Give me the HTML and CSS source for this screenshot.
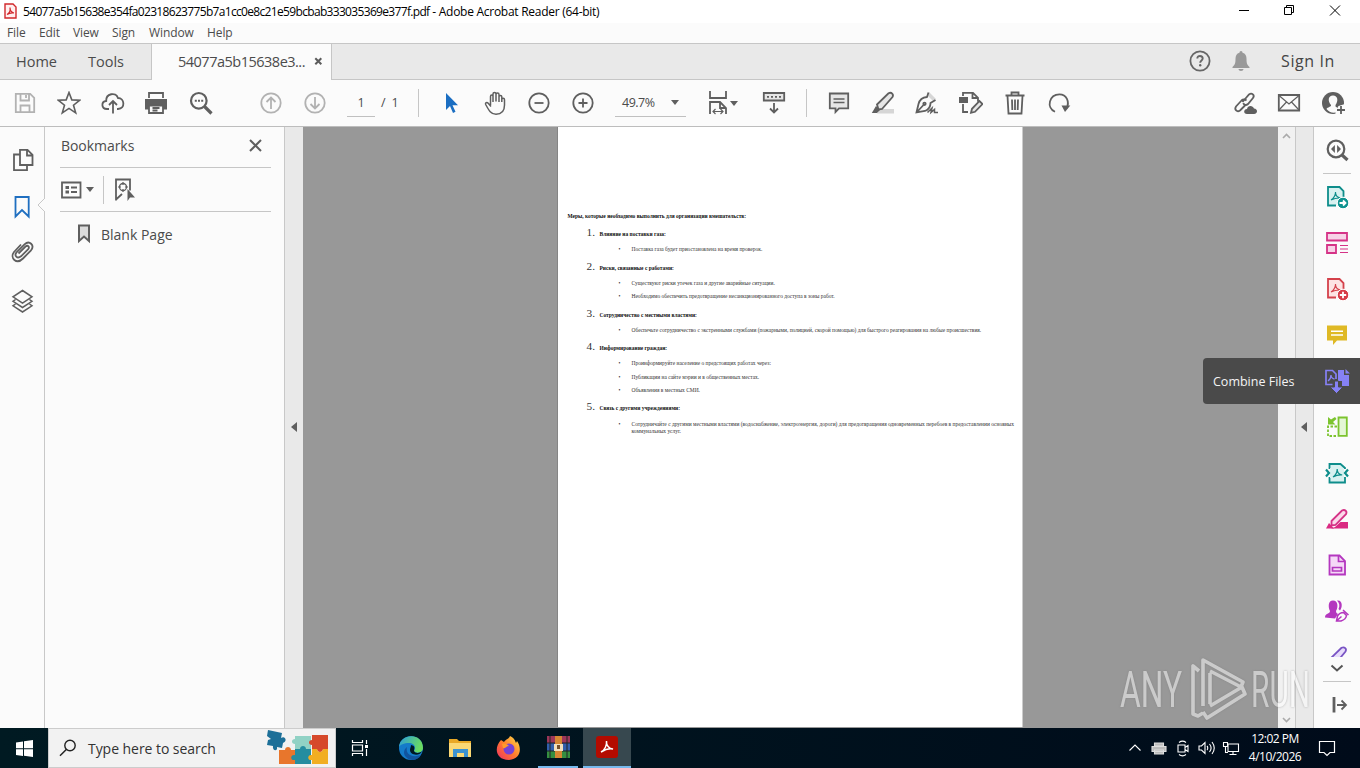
FILE: index.html
```html
<!DOCTYPE html>
<html lang="en">
<head>
    <meta charset="UTF-8">
    <title>Adobe Acrobat Reader (64-bit)</title>
    <link rel="stylesheet" href="styles.css">
</head>
<body>
    <header class="titlebar">
        <svg class="app-icon" width="13" height="16" viewBox="0 0 13 16"><path d="M1 1h8l3 3v11H1z" fill="#fff0f0" stroke="#d1282c" stroke-width="1.4"/><path d="M3 11.5c2-1 3.500-4 3-7 0 3 1.500 5 4 5.500-3-.5-5 .2-7 1.500z" fill="none" stroke="#d1282c" stroke-width="1.200"/></svg>
        <span class="title"><span class="hash">54077a5b15638e354fa02318623775b7a1cc0e8c21e59bcbab333035369e377f.pdf</span> - Adobe Acrobat Reader (64-bit)</span>
        <div class="window-buttons">
            <svg width="45" height="23" viewBox="0 0 45 23"><path d="M17 10.500h10"/></svg>
            <svg width="45" height="23" viewBox="0 0 45 23"><path d="M17.500 7.500h7v7h-7zM19.500 7V5.500h7v7h-2"/></svg>
            <svg width="46" height="23" viewBox="0 0 46 23"><path d="M18 5.500l10 10M28 5.500l-10 10"/></svg>
        </div>
    </header>

    <nav class="menubar">
        <span class="m-file">File</span><span class="m-edit">Edit</span><span class="m-view">View</span><span class="m-sign">Sign</span><span class="m-window">Window</span><span>Help</span>
    </nav>

    <div class="tabs">
        <span class="tab home">Home</span>
        <span class="tab tools">Tools</span>
        <div class="tab-active"><span class="tab-name">54077a5b15638e3...</span>
            <svg width="9" height="9" viewBox="0 0 9 9"><path d="M1.300 1.300l6 6M7.300 1.300l-6 6" stroke="#5c5c5c" stroke-width="2"/></svg>
        </div>
        <div class="account">
            <svg width="24" height="24" viewBox="0 0 24 24"><circle cx="12" cy="12" r="9.600" fill="none" stroke="#666" stroke-width="1.800"/><path d="M9.300 9.500c0-3.400 5.400-3.300 5.400 0 0 2-2.500 2-2.500 4.300" fill="none" stroke="#666" stroke-width="1.900"/><circle cx="12.200" cy="16.300" r="1.200" fill="#666"/></svg>
            <svg class="bell" width="20" height="22" viewBox="0 0 20 22"><path d="M10 1c1 0 1.500.8 1.500 1.700 3 .8 4 3 4 6 0 5 .8 6.300 3 8.300v1H1.500v-1c2.200-2 3-3.300 3-8.300 0-3 1-5.200 4-6C8.500 1.800 9 1 10 1zM7.500 19h5c0 2.500-5 2.500-5 0z" fill="#999"/></svg>
            <span class="sign-in">Sign In</span>
        </div>
    </div>

    <div class="toolbar">
        <div class="btn"><svg class="ic light" viewBox="0 0 24 24"><path d="M2.800 2.800h14.400l4 4v14.400H2.800zM7.500 3v6.500h8.500V3M13 4v3M7.500 21v-6.500h9V21"/></svg></div>
        <div class="btn"><svg class="ic" viewBox="0 0 24 24"><path d="M12 1.500l2.800 7.400 8 .3-6.300 5 2.200 7.600L12 17.400l-6.700 4.400 2.200-7.600-6.300-5 8-.3z" stroke-width="1.600"/></svg></div>
        <div class="btn"><svg class="ic" viewBox="0 0 24 24"><path d="M8 18H6c-6-.2-6-7.500-.8-8C4.800 2.500 14.800.5 17 7c6.500 0 7.800 10.500 0 11h-1M12 22.500v-12M8 14l4-4 4 4"/></svg></div>
        <div class="btn print"><svg class="ic" viewBox="0 0 24 24"><path d="M1 8h22v10.500h-4v-4H5v4H1z" fill="#5f5f5f" stroke="none"/><path d="M5 7V2h14v5M5 14.500h14V22H5zM8.500 17h7M8.500 19.500h5"/></svg></div>
        <div class="btn"><svg class="ic" viewBox="0 0 24 24"><circle cx="9.800" cy="9.800" r="7.800" stroke-width="2.200"/><path d="M15.500 15.500l7 7" stroke-width="3.200"/><path d="M5.800 9.800h2M9 9.800h2M12.200 9.800h2" stroke-width="2"/></svg></div>
        <div class="btn gap-pages"><svg class="ic light" viewBox="0 0 24 24"><circle cx="12" cy="12" r="9.700"/><path d="M12 18V7M7.500 11L12 6.500l4.500 4.500"/></svg></div>
        <div class="btn"><svg class="ic light" viewBox="0 0 24 24"><circle cx="12" cy="12" r="9.700"/><path d="M12 6v11M7.500 13l4.500 4.500 4.500-4.500"/></svg></div>
        <span class="page-input">1</span>
        <span class="page-total">/&nbsp;&nbsp;1</span>
        <i class="sep"></i>
        <div class="btn gap-tools"><svg class="ic" viewBox="0 0 24 24"><path d="M7 2v17l4-4 3 7 2.500-1.200-3-6.500H19z" fill="#1b6ec2" stroke="none"/></svg></div>
        <div class="btn"><svg class="ic hand" viewBox="0 0 24 24"><path d="M6.500 14V5.500c0-2 2.500-2 2.500 0V11M9 10V3c0-2 3-2 3 0v7.500M12 10V3.500c0-2 3-2 3 0v7.500M15 10.500V5.800c0-1.800 2.800-1.800 2.800 0V11M17.800 11V8.500c0-1.600 2.700-1.500 2.700.2V14c0 5-2.500 9.200-8.500 9.200-5 0-7-3.500-10.300-9.700-.8-1.600 1.200-2.600 2.500-1.200L7 15.500" stroke-width="1.500"/></svg></div>
        <div class="btn"><svg class="ic" viewBox="0 0 24 24"><circle cx="12" cy="12" r="9.700"/><path d="M7.500 12h9"/></svg></div>
        <div class="btn"><svg class="ic" viewBox="0 0 24 24"><circle cx="12" cy="12" r="9.700"/><path d="M7.500 12h9M12 7.500v9"/></svg></div>
        <div class="zoom-box"><span>49.7%</span><i class="caret"></i></div>
        <div class="btn fit"><svg class="ic" viewBox="0 0 24 24"><path d="M4 0v7h16V0M4 23V11h10l6 6v6M14 11v6h6"/><path d="M7.500 20.500h9M9.500 18l-2.500 2.500L9.500 23M14.500 18l2.500 2.500-2.500 2.500" stroke-width="1.200"/></svg><i class="caret"></i></div>
        <div class="btn scroll-mode"><svg class="ic" viewBox="0 0 24 24"><path d="M1.800 2h20.400v7.500H1.800z" fill="#e6e6e6"/><path d="M5 5.800h14" stroke-dasharray="2 2"/><path d="M12 12v9M8 17.500l4 4 4-4"/></svg></div>
        <i class="sep sep-tools"></i>
        <div class="btn gap-tools"><svg class="ic" viewBox="0 0 24 24"><path d="M2.800 2.500h18.400v14.800H12L8.500 21v-3.700H2.800z" fill="#e6e6e6"/><path d="M6.500 8h11M6.500 11.500h11" stroke-width="1.300"/></svg></div>
        <div class="btn"><svg class="ic" viewBox="0 0 24 24"><path d="M9 18h14v4.500H6z" fill="#d6d6d6" stroke="none"/><path d="M6 13.500L17.500 2.300c3-1.600 5.500 1 4 3.700L11 18l-3.500.5z" fill="#e6e6e6"/><path d="M5 15l4 4-3 3H.8z" fill="#5f5f5f" stroke="none"/></svg></div>
        <div class="btn"><svg class="ic" viewBox="0 0 24 24"><path d="M14 1l7 7-3 2-5-5z" fill="#d6d6d6" stroke="none"/><path d="M13.500 1.500L12 6C6.500 6.500 4.500 9 3.500 13L1.500 21.500l8.500-1.500c4-1.500 5.500-4 5.500-8l5-3M2 21l6.500-7"/><circle cx="9.500" cy="12.800" r="1.200"/><path d="M12.500 21.500l4.500-4.500-1 4.500 3.500-3v3H23" stroke-width="1.500"/></svg></div>
        <div class="btn"><svg class="ic" viewBox="0 0 24 24"><path d="M4 5V1.800h10l5 5v4M13.500 2v5H19M4 13v8h5"/><path d="M0 6h9v6H0z" fill="#5f5f5f" stroke="none"/><path d="M12 21.800l1-4L20.500 10l3 3-7.500 7.800z" fill="#e6e6e6"/></svg></div>
        <div class="btn"><svg class="ic" viewBox="0 0 24 24"><path d="M2.500 4.500h19M8.500 4V1.500h7V4M4.500 5l1 17.500h13l1-17.500M9 8.500l.3 10.500M12 8.500V19M15 8.500L14.700 19"/></svg></div>
        <div class="btn"><svg class="ic" viewBox="0 0 24 24"><path d="M8 20.800c-9-4-6-17.300 4.500-17.500 7 0 10.500 7.500 7 14"/><path d="M14.500 14.500h8.800L18 21z" fill="#5f5f5f" stroke="none"/></svg></div>
        <div class="share">
            <div class="btn"><svg class="ic" viewBox="0 0 24 24"><path d="M9.500 11L16 3.500c3-2.300 6 1 4 3.500l-5 6c-2 1.700-4 1-4.800-.8M13.500 9.500c-1.500-1.300-3.500-1.500-5 0L3 15.500c-2 3 1 6 4 4l5-5"/><path d="M14 23c-4 0-3.500-5 0-5 .5-4 6-4 7-.5 4 .3 4 5.500 0 5.500z" fill="#5f5f5f" stroke="none"/></svg></div>
            <div class="btn"><svg class="ic" viewBox="0 0 24 24"><path d="M1.800 4h20.400v15.500H1.800z"/><path d="M2 4.500l10 8.500 10-8.500M2 19l7.500-8M22 19l-7.500-8" stroke-width="1.200"/></svg></div>
            <div class="btn"><svg class="ic" viewBox="0 0 24 24"><circle cx="12" cy="12" r="11" fill="#5f5f5f" stroke="none"/><path d="M5.500 18c1-2 5-2 4.500-4C6.500 10 7 4.500 12 4.500s5.500 5.500 2.500 9.500c0 1.500 0 2 1.500 2.500v4.500c-4 2-8 0-10.500-3z" fill="#fbfbfb" stroke="none"/><path d="M24 13v11h-9.500v-4l3-5z" fill="#fbfbfb" stroke="none"/><path d="M20 15v8M16 19h8"/></svg></div>
        </div>
    </div>

    <main>
        <aside class="rail-left">
            <svg class="ic" viewBox="0 0 24 24"><path d="M9 1.800h7.500l5 5V17H9zM16 2v5.500h5.500M8.500 6.500h-5.500v15.700h13V17.500"/></svg>
            <svg class="ic bookmark-on" viewBox="0 0 24 24"><path d="M4.500 2h13.200v19.500L11 15l-6.500 6.500z"/></svg>
            <svg class="ic clip" viewBox="0 0 24 24"><path d="M7.500 13.500l7-7c2.500-2 4.500.7 2.500 2.800l-7 7c-4 3-7-1-4.500-4l8-8c5-4.500 10.500 1 6.500 6L12 18.500C5.500 25 -1.500 18 3 12l7-7.500"/></svg>
            <svg class="ic layers" viewBox="0 0 24 24"><path d="M11.500 1.500L21 7.800l-9.500 6.300L2 7.800zM4.500 10.500L2 12.300l9.500 6.200 9.500-6.200-2.500-1.800M4.500 15L2 16.800 11.500 23l9.500-6.200-2.500-1.800" stroke-width="1.500"/></svg>
            <svg class="notch" width="8" height="14" viewBox="0 0 8 14"><path d="M8 0L1 7l7 7" fill="#fbfbfb" stroke="#c8c8c8"/></svg>
        </aside>

        <section class="bookmarks">
            <div class="panel-head"><span>Bookmarks</span><svg width="13" height="13" viewBox="0 0 13 13"><path d="M1 1l11 11M12 1L1 12" stroke="#5f5f5f" stroke-width="2"/></svg></div>
            <div class="panel-tools">
                <svg class="ic" viewBox="0 0 24 24"><path d="M2 4.500h18.500v15H2z"/><path d="M5.500 9.500h3.500M5.500 14h3.500" stroke-width="3"/><path d="M11 9.500h6M11 14h6"/></svg>
                <i class="caret"></i><i class="sep"></i>
                <svg class="ic add-mark" viewBox="0 0 24 24"><path d="M5 22.500V1.500h14v11M5 21.500l6-5.500"/><circle cx="12" cy="9" r="3.500" stroke-width="1.300"/><path d="M12 4v3M12 11v3M7 9h3M14 9h3" stroke-width="1.200"/><path d="M16.500 11v12l2.500-3.500h5z" fill="#5f5f5f" stroke="none"/></svg>
            </div>
            <div class="panel-item"><svg width="14" height="20" viewBox="0 0 14 20"><path d="M2 1.500h10V17l-5-4.500L2 17z" fill="#dcdcdc" stroke="#5f5f5f" stroke-width="2"/></svg><span>Blank Page</span></div>
        </section>
        <div class="splitter left"><i></i></div>

        <section class="viewer">
            <article class="page">
                <h1>Меры, которые необходимо выполнить для организации вмешательств:</h1>
                <h2><b>1.</b>Влияние на поставки газа:</h2>
                <ul><li>Поставка газа будет приостановлена на время проверок.</li></ul>
                <h2><b>2.</b>Риски, связанные с работами:</h2>
                <ul>
                    <li>Существуют риски утечек газа и другие аварийные ситуации.</li>
                    <li>Необходимо обеспечить предотвращение несанкционированного доступа в зоны работ.</li>
                </ul>
                <h2><b>3.</b>Сотрудничество с местными властями:</h2>
                <ul><li>Обеспечьте сотрудничество с экстренными службами (пожарными, полицией, скорой помощью) для быстрого реагирования на любые происшествия.</li></ul>
                <h2><b>4.</b>Информирование граждан:</h2>
                <ul>
                    <li>Проинформируйте население о предстоящих работах через:</li>
                    <li>Публикации на сайте мэрии и в общественных местах.</li>
                    <li>Объявления в местных СМИ.</li>
                </ul>
                <h2><b>5.</b>Связь с другими учреждениями:</h2>
                <ul><li>Сотрудничайте с другими местными властями (водоснабжение, электроэнергия, дороги) для предотвращения одновременных перебоев в предоставлении основных<br>коммунальных услуг.</li></ul>
            </article>
        </section>
        <div class="scrollbar">
            <svg width="9" height="6" viewBox="0 0 9 6"><path d="M1 5l3.500-3.500L8 5"/></svg>
            <svg width="9" height="6" viewBox="0 0 9 6"><path d="M1 1l3.500 3.500L8 1"/></svg>
        </div>
        <div class="splitter right"><i></i></div>

        <aside class="rail-right">
            <div class="tool-search"><svg class="ic" viewBox="0 0 24 24"><circle cx="11" cy="11" r="8.300" stroke-width="2.200"/><path d="M17 17l5.500 5" stroke-width="3.200"/><path d="M9.900 7v8L6 11zM12.100 7v8L16 11z" fill="#5f5f5f" stroke="none"/></svg></div>
            <div class="tool-list">
                <svg class="ic teal" viewBox="0 0 24 24"><path d="M11 20.500H3V2h11.500l4 4v6" fill="#d8f1f0"/><path d="M6 15c3-2 4.500-5 4.500-8 0 3 1.500 5.500 5 6-4-.3-6.500.5-9.500 2z" stroke-width="1.100"/><circle cx="18" cy="18" r="5.800" fill="#0e9390" stroke="#fff" stroke-width="1"/><path d="M14.500 18h6M18 15.500l2.500 2.500-2.500 2.500" stroke="#fff"/></svg>
                <svg class="ic pink" viewBox="0 0 24 24"><path d="M2 2h20v7.500H2zM2 14h9v8H2z" fill="#f7d2e7"/><path d="M15 14.500h8M15 18h8M15 21.500h8" stroke-width="1.200"/></svg>
                <svg class="ic red" viewBox="0 0 24 24"><path d="M11 20.500H3V2h11.500l4 4v6" fill="#fde3e3"/><path d="M6 15c3-2 4.500-5 4.500-8 0 3 1.500 5.500 5 6-4-.3-6.500.5-9.500 2z" stroke-width="1.100"/><circle cx="18" cy="18" r="5.800" fill="#d73c48" stroke="#fff" stroke-width="1"/><path d="M14.800 18h6.400M18 14.800v6.400" stroke="#fff"/></svg>
                <svg class="ic" viewBox="0 0 24 24"><path d="M2 2.500h20v15H12L8 22v-4.500H2z" fill="#dfb925" stroke="none"/><path d="M6 8.300h12M6 12h12" stroke="#fff" stroke-width="1.600"/></svg>
                <svg class="ic" viewBox="0 0 24 24"></svg>
                <svg class="ic green" viewBox="0 0 24 24"><path d="M13.500 2.500h8.300v18.300h-8.300z" fill="#e4f7d5"/><path d="M12 11.500H3v9.500h9" stroke-dasharray="2.500 1.500"/><path d="M3 2v7.500h7.500L8 7l3.500-3-1.500-2-4 2.500z" fill="#7cc42e" stroke="none"/></svg>
                <svg class="ic teal" viewBox="0 0 24 24"><path d="M4.500 8V3h11l4.500 4v1M4.500 16v5.500H20V16" fill="#d8f1f0"/><path d="M5 7h14v10H5z" fill="#d8f1f0" stroke="none"/><path d="M1 8.500L4 12l-3 3.500M23 8.500L20 12l3 3.500" stroke-width="2.200"/><path d="M8 16c3-2 4.200-5 4.200-8 0 3 1.500 5.500 5 6-4-.3-6.500.5-9.200 2z" stroke-width="1.200"/></svg>
                <svg class="ic pink" viewBox="0 0 24 24"><path d="M10 20l5.500-5H23v6.500H6z" fill="#da2a82" stroke="none"/><path d="M6.500 14L17 3.500c3-1.500 5.500 1 4 3.700L10.500 18l-4 .5z" fill="#fbd9ea"/><path d="M4 16l5 5.500H1z" fill="#da2a82" stroke="none"/></svg>
                <svg class="ic purple" viewBox="0 0 24 24"><path d="M4.500 2.500h10l5.500 5.500v13.500H4.500z" fill="#f5d8f7"/><path d="M13.500 3v5.500H20M7.500 14.500h9V18h-9z" stroke-width="1.700"/></svg>
                <svg class="ic purple" viewBox="0 0 24 24"><path d="M0 18.500c0-4.500 5-3.500 5-6.500C3 8 3 1.500 8 1.500s5.500 6.500 3 10.500c0 2 1 2.500 2 3l-3 4.500zM12 1.500c6-1 5.500 7 3 10L13.500 10C15 7 14.500 4 12 1.500z" fill="#b437bf" stroke="none"/><path d="M11.500 22l1-5c1.500-2.500 3-3.500 6-3.500l3 3c-.5 3.500-2.500 4.500-5.500 5.500zM12 21.500l4.500-4M18 11l5.500 5" stroke-width="1.500"/></svg>
                <svg class="ic violet" viewBox="0 0 24 24"><path d="M5 14L16.500 2.800c3-1.500 5.500 1 4 3.700L11 18" fill="#e7dcfb"/></svg>
            </div>
            <svg class="more" width="14" height="8" viewBox="0 0 14 8"><path d="M1.500 1.500L7 6.500l5.500-5" fill="none" stroke="#555" stroke-width="2"/></svg>
            <div class="collapse"><svg class="ic" viewBox="0 0 24 24"><path d="M9 4v15.500" stroke-width="2.800"/><path d="M12 12h8.500M16.500 7.500L21 12l-4.500 4.500"/></svg></div>
        </aside>

        <div class="tooltip"><span>Combine Files</span><svg class="ic" viewBox="0 0 24 24"><path d="M13 1h6v5h5v11h-7v-5h-4z" fill="#8681f5" stroke="none"/><path d="M20.500 0v4.500H25z" fill="#8681f5" stroke="none"/><path d="M7.500 15.500H1V1.500h6.500L11 5v5" stroke="#8681f5" stroke-width="1.700"/><path d="M3 12c2-1.500 3-3.500 3-6 0 2.500 1.300 3.500 3.500 4" stroke="#8681f5" stroke-width="1.300"/><path d="M9.500 12h4v6H18l-6.500 6.500L5 18h4.500z" fill="#8681f5" stroke="#4a4a4a" stroke-width="1"/></svg></div>

        <svg class="watermark" width="200" height="66" viewBox="0 0 200 66">
            <text x="5" y="51" textLength="62" lengthAdjust="spacingAndGlyphs">ANY</text>
            <text x="136" y="51" textLength="59" lengthAdjust="spacingAndGlyphs">RUN</text>
            <path d="M84 15l-6-5v48l5 2 5-3M88 50V4l40 22-2 5-31-16M88 56l4 6 38-24-3-7-32 19M95 48V17"/>
        </svg>
    </main>

    <footer class="taskbar">
        <div class="start"><svg width="17" height="17" viewBox="0 0 17 17"><path d="M0 2.500l7-1v6.800H0zM8 1.300L17 0v8.300H8zM0 9.300h7V16l-7-1zM8 9.300h9V17l-9-1.200z" fill="#fff"/></svg></div>
        <div class="search">
            <svg width="18" height="18" viewBox="0 0 18 18"><circle cx="11" cy="6.500" r="5.200" fill="none" stroke="#222" stroke-width="1.400"/><path d="M7.300 10.500L1 16.800" stroke="#222" stroke-width="1.500"/></svg>
            <span>Type here to search</span>
            <svg class="puzzle" width="62" height="36" viewBox="0 0 62 36">
                <path d="M2 0l14 3-1 5c4-3 7 3 2 5l-1 5-5-1c1 5-5 4-4-1l-6-1 1-5 3-1-4-3z" fill="#1c6f98"/>
                <path d="M13 20h6c0-4 6-4 6 0h4v14H13z" fill="#e8762c"/><path d="M29 6h16v13h-5c0 4-6 4-6 0h-5v-5c-4 0-4-5 0-5z" fill="#91d2c5"/><path d="M46 5h16v14h-5c0 4-6 4-6 0h-5v-4c-4 0-4-5 0-5z" fill="#d6492b"/><path d="M29 19h5c0-4 6-4 6 0h5v15H29v-4c-5 1-5-6 0-5z" fill="#258da0"/><path d="M46 19h5c0 4 6 4 6 0h5v15H46v-4c-5 1-5-6 0-5z" fill="#f1ae22"/>
            </svg>
        </div>
        <div class="task task-view"><svg width="18" height="18" viewBox="0 0 18 18" fill="none" stroke="#fff" stroke-width="1.200"><path d="M1.500 1v2.500h10V1M1.500 6h10v6h-10zM1.500 17v-2.500h10V17M15.500 1v4M15.500 10v7"/><path d="M15.500 6v3" stroke-width="3"/></svg></div>
        <div class="task edge"><svg width="26" height="26" viewBox="0 0 26 26"><defs><linearGradient id="edge" x1="0" y1="0" x2="1" y2=".3"><stop stop-color="#2a9cdb"/><stop offset="1" stop-color="#6bdc60"/></linearGradient></defs><circle cx="13" cy="13" r="12" fill="#147bca"/><path d="M1 12C2-2 25-3 25 13c0 5-7 6-9 3 3-5-1-8-5-8-5 0-9 2-10 4z" fill="url(#edge)"/><path d="M9 12c-2 8 6 11 14 8-3 6-11 6-14 3-4-3-4-8 0-11z" fill="#11549f"/><path d="M13 10c5 1 3 4 3 6 1 3 7 2 8 0-1 5-12 5-12-1 0-2 1-3 1-5z" fill="#001822"/></svg></div>
        <div class="task"><svg width="24" height="22" viewBox="0 0 24 22"><path d="M1 2h8l2 2h12v16H1z" fill="#e9a826"/><path d="M1 6h22v14H1z" fill="#fbd874"/><path d="M5 20v-8h15v8h-4v-4H9v4z" fill="#3c92d0"/></svg></div>
        <div class="task"><svg width="26" height="26" viewBox="0 0 26 26"><defs><linearGradient id="fox" x1="1" y1="0" x2="0" y2="1"><stop stop-color="#ffe24a"/><stop offset=".5" stop-color="#ff7d2d"/><stop offset="1" stop-color="#f02c63"/></linearGradient></defs><path d="M5 5l3 2c2-3 5-3 6-6 4 2 5 4 6 7l1-2c5 7 4 18-8 19C-1 25-2 12 5 5z" fill="url(#fox)"/><circle cx="13" cy="14" r="5.500" fill="#7542d5"/><path d="M6 9c3-1 5 0 7 2-3 0-3 3-6 2z" fill="#ff9a2b"/></svg></div>
        <div class="task running"><svg width="25" height="24" viewBox="0 0 25 24"><path d="M1 1h23v7H1z" fill="#9c3659"/><path d="M1 8h23v8H1z" fill="#315fac"/><path d="M1 16h23v7H1z" fill="#358f40"/><path d="M1 8h23M1 16h23M4 1v22M21 1v22" stroke="#222" stroke-width="1"/><path d="M9 1h7v22H9z" fill="#d58733"/><path d="M8 9h9v7H8z" fill="#f1dfbd"/><path d="M11 10h3v4h-3z" fill="#73502c"/></svg></div>
        <div class="task running active"><svg width="22" height="22" viewBox="0 0 22 22"><rect width="22" height="22" rx="3" fill="#b30b00"/><path d="M5 16c4-2 6-7 5.500-11C10 9 13 13 17 13c-4-1-8 .5-12 3z" fill="none" stroke="#fff" stroke-width="1.500"/></svg></div>
        <div class="tray">
            <svg class="t" viewBox="0 0 18 18"><path d="M3.500 11.500L9 6l5.500 5.500"/></svg>
            <svg class="t" viewBox="0 0 18 18"><path d="M4.500 4h9v3h-9zM2 7.500h14v5H2zM4.500 11h9v4h-9z" fill="#bbb" stroke="#ddd"/></svg>
            <svg class="t" viewBox="0 0 18 18"><path d="M4 6h7v7H4zM11 8.500l3-2v6l-3-2M5 3.500c2-1.500 5-1.500 7 0M5 15.500c2 1.500 5 1.500 7 0"/></svg>
            <svg class="t" viewBox="0 0 18 18"><path d="M1 7h2.500L7 3.500v11L3.500 11H1zM9 7c1 1 1 3 0 4M11.500 5c2 2.500 2 5.500 0 8M14 3c3 4 3 8 0 12"/></svg>
            <svg class="t" viewBox="0 0 18 18"><path d="M6 5h10.500v7.500H6zM11 12.500V15M7.500 15.500h7M1.500 3.500h4v4h-4zM3.500 7.500v6H6"/></svg>
            <div class="clock"><span>12:02 PM</span><span>4/10/2026</span></div>
            <svg class="notify" width="18" height="18" viewBox="0 0 18 18"><path d="M1.500 2.500h15v11H12L9 16.500l-3-3H1.500z" fill="none" stroke="#fff" stroke-width="1.200"/></svg>
        </div>
    </footer>
</body>
</html>
```
FILE: styles.css
```css
* {
    margin: 0;
    padding: 0;
    box-sizing: border-box;
}

body {
    width: 1360px;
    height: 768px;
    overflow: hidden;
    display: flex;
    flex-direction: column;
    font-family: "Open Sans", "Noto Sans", sans-serif;
    color: #4b4b4b;
    background: #fbfbfb;
}

svg {
    display: block;
    flex: none;
}

/* Title bar */
.titlebar {
    height: 23px;
    display: flex;
    align-items: center;
    padding: 0 2px 0 4px;
    background: #fff;
    color: #000;
    font-size: 12px;
}

.app-icon {
    margin: 0 6px 2px 0;
}

.title {
    white-space: nowrap;
    letter-spacing: -0.27px;
}

.hash {
    letter-spacing: -0.67px;
}

.window-buttons {
    display: flex;
    margin-left: auto;
}

.window-buttons path {
    fill: none;
    stroke: #000;
}

.menubar {
    height: 20px;
    display: flex;
    align-items: center;
    padding: 0 0 2px 7px;
    font-size: 12px;
    letter-spacing: -0.1px;
}

.menubar span {
    white-space: nowrap;
}

.m-file { width: 32px; }
.m-edit { width: 34px; }
.m-view { width: 39px; }
.m-sign { width: 37px; }
.m-window { width: 58px; }

/* Tabs */
.tabs {
    height: 37px;
    display: flex;
    align-items: center;
    background: #e9e9e9;
    border-top: 1px solid #c6c6c6;
    border-bottom: 1px solid #c6c6c6;
    font-size: 14.5px;
}

.home {
    width: 88px;
    padding-left: 16px;
}

.tools {
    width: 63px;
}

.tab-active {
    width: 181px;
    height: 36px;
    display: flex;
    align-items: center;
    justify-content: space-between;
    padding: 0 8px 1px 26px;
    align-self: flex-start;
    background: #fbfbfb;
    border-left: 1px solid #c6c6c6;
    border-right: 1px solid #c6c6c6;
}

.tab-name {
    letter-spacing: -0.5px;
}

.account {
    display: flex;
    align-items: center;
    margin-left: auto;
    padding: 0 25px 2px 0;
}

.bell {
    margin: 0 30px 0 19px;
}

.sign-in {
    font-size: 16px;
    font-weight: 500;
    letter-spacing: 0.6px;
    color: #444;
}

/* Toolbar */
.toolbar {
    height: 47px;
    display: flex;
    align-items: center;
    padding: 0 5px 0 3px;
    border-bottom: 1px solid #bdbdbd;
    font-size: 12.5px;
}

.btn {
    width: 44px;
    flex: none;
    display: flex;
    justify-content: center;
    align-items: center;
}

.ic {
    width: 24px;
    height: 24px;
    fill: none;
    stroke: #5f5f5f;
    stroke-width: 1.8;
}

.light { stroke: #b2b2b2; }
.print { padding-right: 2px; }
.hand { margin-left: 2px; }
.gap-pages { margin-left: 26px; }
.gap-tools { margin-left: 10px; }

.page-input {
    width: 28px;
    height: 27px;
    margin-left: 10px;
    text-align: center;
    line-height: 26px;
    border-bottom: 1px solid #c0c0c0;
}

.page-total {
    width: 43px;
    padding: 0 0 1px 6px;
    white-space: nowrap;
    letter-spacing: -0.2px;
}

.sep {
    width: 1px;
    height: 28px;
    background: #c6c6c6;
}

.caret {
    width: 0;
    height: 0;
    border: 4px solid transparent;
    border-top: 5px solid #5f5f5f;
    border-bottom: 0;
}

.zoom-box {
    width: 71px;
    height: 27px;
    margin-left: 10px;
    padding: 0 7px;
    display: flex;
    align-items: center;
    justify-content: space-between;
    border-bottom: 1px solid #c0c0c0;
    letter-spacing: -0.5px;
}

.fit {
    width: 36px;
    margin-left: 18px;
}

.scroll-mode {
    margin-left: 12px;
}

.sep-tools {
    margin-left: 10px;
}

.share {
    display: flex;
    margin-left: auto;
}

/* Work area */
main {
    position: relative;
    height: 601px;
    display: flex;
}

.rail-left {
    position: relative;
    width: 45px;
    padding: 21px 0 0 11px;
    border-right: 1px solid #c8c8c8;
}

.bookmark-on {
    margin-top: 23px;
    stroke: #1f6fc0;
}

.clip { margin-top: 21px; }
.layers { margin-top: 25px; }

.notch {
    position: absolute;
    right: -1px;
    top: 71px;
}

.bookmarks {
    width: 239px;
    padding: 0 13px 0 15px;
}

.panel-head {
    height: 41px;
    display: flex;
    align-items: center;
    justify-content: space-between;
    padding: 0 9px 3px 1px;
    border-bottom: 1px solid #c6c6c6;
    font-size: 14px;
    letter-spacing: -0.05px;
}

.panel-tools {
    height: 44px;
    display: flex;
    align-items: center;
    border-bottom: 1px solid #c6c6c6;
}

.panel-tools .sep { margin: 0 7px 0 9px; }
.panel-tools .caret { margin-left: 2px; }

.panel-item {
    display: flex;
    align-items: center;
    gap: 10px;
    padding: 12px 0 0 17px;
    font-size: 14px;
}

.splitter {
    width: 19px;
    display: flex;
    align-items: center;
    justify-content: center;
    padding: 0 1px 1px 0;
    background: #e9e9e9;
    border-left: 1px solid #c8c8c8;
}

.splitter i {
    border: 5px solid transparent;
    border-right: 6px solid #5f5f5f;
    border-left: 0;
}

.viewer {
    width: 975px;
    background: #989898;
    padding-left: 254px;
}

/* PDF page */
.page {
    width: 466px;
    height: 600px;
    padding: 84px 0 0 9.5px;
    background: #fff;
    border-left: 1px solid #858585;
    border-right: 1px solid #ccc;
    font-family: "Liberation Serif", serif;
    font-size: 5.46px;
    line-height: 7px;
    color: #333;
    white-space: nowrap;
}

.page h1,
.page h2 {
    font-size: 5.46px;
    color: #111;
}

.page h1 {
    height: 15px;
    line-height: 10px;
}

.page h2 {
    height: 18px;
    display: flex;
    align-items: baseline;
    padding-left: 19px;
    line-height: 13px;
}

.page h2 b {
    width: 13px;
    font-size: 11.3px;
    font-weight: normal;
    color: #333;
}

.page ul {
    list-style: none;
    padding: 2.2px 0 0 51px;
}

.page li {
    display: flow-root;
    min-height: 13.4px;
    padding-left: 13px;
    text-indent: -13px;
}

.page li::before {
    content: "•";
    display: inline-block;
    width: 13px;
    text-indent: 0;
}

.scrollbar {
    width: 17px;
    display: flex;
    flex-direction: column;
    align-items: center;
    justify-content: space-between;
    padding: 6px 0 5px;
    background: #f1f1f1;
}

.scrollbar path {
    fill: none;
    stroke: #aaa;
    stroke-width: 1.6;
}

.right {
    padding-right: 2px;
    border-right: 1px solid #c8c8c8;
}

.rail-right {
    width: 46px;
    display: flex;
    flex-direction: column;
    align-items: center;
}

.tool-search {
    width: 28px;
    height: 47px;
    padding: 11px 0 0 2px;
    border-bottom: 1px solid #c6c6c6;
}

.tool-list {
    height: 483px;
    padding-top: 11px;
    display: flex;
    flex-direction: column;
    gap: 22px;
    overflow: hidden;
}

.teal { stroke: #0e8d8b; }
.pink { stroke: #d53387; }
.red { stroke: #d4414b; }
.green { stroke: #7cc42e; }
.purple { stroke: #b437bf; }
.violet { stroke: #7954c4; }

.more {
    margin-top: 7px;
}

.collapse {
    width: 28px;
    margin-top: 9px;
    padding: 11px 0 0 2px;
    border-top: 1px solid #c6c6c6;
}

.tooltip {
    position: absolute;
    right: 0;
    top: 231px;
    width: 157px;
    height: 46px;
    display: flex;
    align-items: center;
    justify-content: space-between;
    padding: 0 11px 0 10px;
    border-radius: 4px 0 0 4px;
    background: #4a4a4a;
    color: #f4f4f4;
    font-size: 12.5px;
}

.tooltip svg {
    overflow: visible;
}

.watermark {
    position: absolute;
    left: 1115px;
    top: 529px;
    opacity: .5;
    filter: drop-shadow(0 0 1px #777);
}

.watermark text {
    font: 400 50px Roboto, sans-serif;
    fill: #fff;
}

.watermark path {
    fill: none;
    stroke: #fff;
    stroke-width: 3.6;
    stroke-linejoin: round;
}

/* Taskbar */
.taskbar {
    height: 40px;
    display: flex;
    background: linear-gradient(90deg, #001a22, #000b1a);
}

.start {
    width: 48px;
    display: flex;
    align-items: center;
    justify-content: center;
}

.search {
    width: 288px;
    display: flex;
    align-items: center;
    padding: 0 7px 0 10px;
    background: #f2f2f2;
    border: 1px solid #ccc;
    color: #333;
    font-size: 14px;
}

.search span {
    margin-left: 11px;
    white-space: nowrap;
    letter-spacing: -0.05px;
}

.puzzle {
    margin-left: auto;
}

.task {
    width: 49px;
    display: flex;
    align-items: center;
    justify-content: center;
}

.task-view { padding-right: 2px; }

.edge {
    width: 50px;
    padding-left: 2px;
}

.running {
    width: 40px;
    margin-left: 5px;
    border-bottom: 2px solid #76b9ed;
}

.active {
    width: 48px;
    background: #37484f;
}

.tray {
    display: flex;
    align-items: center;
    gap: 6px;
    margin-left: auto;
    padding-right: 24px;
    color: #fff;
}

.t {
    width: 18px;
    height: 18px;
    fill: none;
    stroke: #fff;
    stroke-width: 1.1;
}

.clock {
    width: 54px;
    margin-left: 2px;
    display: flex;
    flex-direction: column;
    align-items: center;
    font-size: 12px;
    line-height: 18px;
    letter-spacing: -0.5px;
}

.notify {
    margin-left: 10px;
}
```
